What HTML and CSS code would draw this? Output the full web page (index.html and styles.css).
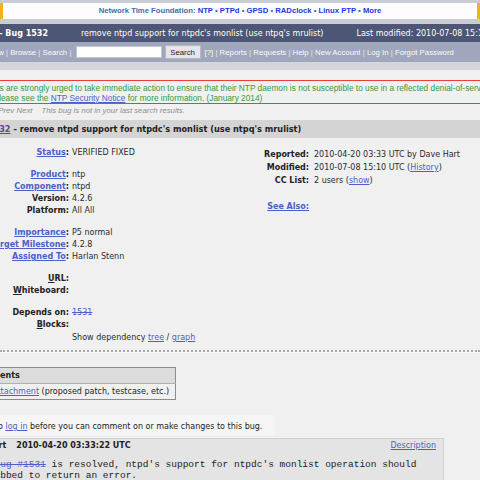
FILE: index.html
```html
<!DOCTYPE html>
<html>
<head>
<meta charset="utf-8">
<title>Bug 1532 – remove ntpd support for ntpdc's monlist (use ntpq's mrulist)</title>
<link rel="stylesheet" href="styles.css">
</head>
<body>
<div class="top">
  <div class="banner"><span class="ntf">Network Time Foundation:</span> <a href="#">NTP</a> • <a href="#">PTPd</a> • <a href="#">GPSD</a> • <a href="#">RADclock</a> • <a href="#">Linux PTP</a> • <a href="#">More</a></div>
</div>
<div class="header">
  <span class="h-title">Bugzilla – Bug 1532</span>
  <span class="h-sub">remove ntpd support for ntpdc's monlist (use ntpq's mrulist)</span>
  <span class="h-info">Last modified: 2010-07-08 15:10:43 UTC</span>
</div>
<div class="nav">
  <span class="nav-in"><a href="#">Home</a> | <a href="#">New</a> | <a href="#">Browse</a> | <a href="#">Search</a> | </span>
  <input class="q" type="text">
  <button class="btn">Search</button>
  <span class="nav-rest"><a href="#">[?]</a> | <a href="#">Reports</a> | <a href="#">Requests</a> | <a href="#">Help</a> | <a href="#">New Account</a> | <a href="#">Log In</a> | <a href="#">Forgot Password</a></span>
</div>
<div class="gap"></div>
<div class="main">
  <div class="notice"><span class="l1">NTP users are strongly urged to take immediate action to ensure that their NTP daemon is not susceptible to use in a reflected denial-of-service (DrDoS) attack.</span><br>Please see the <a href="#">NTP Security Notice</a> for more information. (January 2014)</div>
  <div class="navline"><span class="pn">First Last Prev Next</span><span class="nolist">This bug is not in your last search results.</span></div>
  <div class="titlebar"><a href="#" class="bugid">Bug 1532</a> - remove ntpd support for ntpdc's monlist (use ntpq's mrulist)</div>
  <div class="fields">
    <div class="fl">
      <div class="lab"><a href="#">Status</a>:</div><div class="val">VERIFIED FIXED</div>
      <div class="sp"></div>
      <div class="lab"><a href="#">Product</a>:</div><div class="val">ntp</div>
      <div class="lab"><a href="#">Component</a>:</div><div class="val">ntpd</div>
      <div class="lab">Version:</div><div class="val">4.2.6</div>
      <div class="lab">Platform:</div><div class="val">All All</div>
      <div class="sp"></div>
      <div class="lab"><a href="#">Importance</a>:</div><div class="val">P5 normal</div>
      <div class="lab"><a href="#">Target Milestone</a>:</div><div class="val">4.2.8</div>
      <div class="lab"><a href="#">Assigned To</a>:</div><div class="val">Harlan Stenn</div>
      <div class="sp"></div>
      <div class="lab"><u>U</u>RL:</div><div class="val"></div>
      <div class="lab"><u>W</u>hiteboard:</div><div class="val"></div>
      <div class="sp"></div>
      <div class="lab">Depends on:</div><div class="val"><a href="#" class="closed">1531</a></div>
      <div class="lab"><u>B</u>locks:</div><div class="val"></div>
      <div class="lab last"></div><div class="val last">Show dependency <a href="#">tree</a> / <a href="#">graph</a></div>
    </div>
    <div class="fr">
      <div class="lab">Reported:</div><div class="val">2010-04-20 03:33 UTC by Dave Hart</div>
      <div class="lab">Modified:</div><div class="val">2010-07-08 15:10 UTC (<a href="#">History</a>)</div>
      <div class="lab">CC List:</div><div class="val">2 users (<a href="#">show</a>)</div>
      <div class="sp"></div>
      <div class="lab"><a href="#" class="seealso">See Also:</a></div><div class="val"></div>
    </div>
  </div>
  <hr class="sep">
  <table class="att">
    <tr><th>Attachments</th></tr>
    <tr><td><a href="#">Add an attachment</a> (proposed patch, testcase, etc.)</td></tr>
  </table>
  <div class="login">You need to <a href="#">log in</a> before you can comment on or make changes to this bug.</div>
  <div class="comment">
    <div class="chead"><span class="who">Dave Hart</span><span class="when">2010-04-20 03:33:22 UTC</span><a href="#" class="desc">Description</a></div>
    <pre class="ctext">Once <a href="#" class="closed">Bug #1531</a> is resolved, ntpd's support for ntpdc's monlist operation should
be stubbed to return an error.</pre>
  </div>
</div>
</body>
</html>
```
FILE: styles.css
```css
html, body {
  margin: 0;
  padding: 0;
}
body {
  width: 480px;
  height: 480px;
  overflow: hidden;
  background: #f0f0f0;
  font-family: "DejaVu Sans", Verdana, sans-serif;
  font-size: 8px;
  color: #222;
}
a {
  color: #4d5fc8;
}

.top {
  background: #c9ccd3;
  padding: 3px 0 5px;
}
.banner {
  background: #fdfdfd;
  border-left: 3px solid #f3b21a;
  border-right: 3px solid #f3b21a;
  height: 16px;
  line-height: 16px;
  text-align: center;
  font-family: "Liberation Sans", Arial, sans-serif;
  font-weight: bold;
  font-size: 7.7px;
  color: #3d6ea8;
  white-space: nowrap;
}
.banner a {
  color: #1e36e0;
  text-decoration: none;
}

.header {
  background: #4d5674;
  height: 18px;
  display: flex;
  align-items: center;
  gap: 33px;
  color: #fff;
  white-space: nowrap;
}
.h-title {
  font-weight: bold;
  margin-left: -40px;
}

.nav {
  background: #a0a6bc;
  height: 20px;
  display: flex;
  align-items: center;
  white-space: nowrap;
  font-family: "Liberation Sans", Arial, sans-serif;
  font-size: 7.8px;
  color: #e8eaf2;
}
.nav a {
  color: #fafbff;
  text-decoration: none;
}
.nav-in {
  margin-left: -39px;
  white-space: pre;
}
.q {
  width: 86px;
  height: 12px;
  box-sizing: border-box;
  border: 1px solid #c4c7d2;
  background: #fff;
  margin: 0 3px 0 2px;
  padding: 0;
}
.btn {
  width: 36px;
  height: 14px;
  box-sizing: border-box;
  padding: 0;
  border: 1px solid #b4b8c4;
  background: #e6e6e8;
  font-family: "Liberation Sans", Arial, sans-serif;
  font-size: 7.8px;
  color: #222;
  margin-right: 4px;
}
.nav-rest {
  white-space: pre;
}

.gap {
  height: 8px;
  background: #d4d6da;
}

.main {
  padding-top: 10px;
}
.notice {
  border: 1px solid #f23a3a;
  margin-left: -20px;
  margin-right: -300px;
  padding: 2px 0 0 12.6px;
  line-height: 10px;
  height: 20px;
  font-family: "Liberation Sans", Arial, sans-serif;
  font-size: 8.3px;
  color: #37993a;
  white-space: nowrap;
}
.notice .l1 {
  margin-left: -29px;
}

.navline {
  height: 14px;
  line-height: 14px;
  display: flex;
  gap: 9px;
  white-space: nowrap;
  font-family: "Liberation Sans", Arial, sans-serif;
  font-style: italic;
  font-size: 7.8px;
  color: #8d8d8d;
}
.pn {
  margin-left: -36px;
}

.titlebar {
  margin-top: 2px;
  height: 18px;
  line-height: 18px;
  background: #d4d4d4;
  font-weight: bold;
  font-size: 8.2px;
  white-space: nowrap;
  margin-left: -33px;
}
.titlebar .bugid {
  color: #6a3f9c;
}

.fields {
  display: flex;
  padding-top: 9px;
  white-space: nowrap;
}
.fl {
  margin-left: -50px;
  width: 313px;
  display: grid;
  grid-template-columns: 119px 1fr;
  column-gap: 3px;
  align-content: start;
  line-height: 12px;
}
.fl .lab,
.fl .val {
  height: 12px;
}
.fr {
  margin-top: 1px;
  display: grid;
  grid-template-columns: 46px 1fr;
  column-gap: 5px;
  align-content: start;
  line-height: 13px;
}
.fr .lab,
.fr .val {
  height: 13px;
}
.lab {
  text-align: right;
  font-weight: bold;
}
.val {
  color: #2a2a2a;
}
.sp {
  grid-column: 1 / 3;
}
.fl .sp {
  height: 10px;
}
.fr .sp {
  height: 13px;
}
.fl .last {
  height: 14px;
  line-height: 14px;
}
.closed {
  text-decoration: line-through;
}
.seealso {
  font-weight: bold;
}

.sep {
  margin: 5px 0 0;
  border: 0;
  border-top: 2px dotted #a8a8a8;
  border-bottom: 1px solid #fafafa;
  height: 0;
}

.att {
  margin-top: 14px;
  margin-left: -42px;
  border-collapse: collapse;
  border: 1px solid #8c8c8c;
  white-space: nowrap;
}
.att th {
  background: #dcdcdc;
  text-align: left;
  height: 15px;
  line-height: 15px;
  padding: 0 6px 0 3px;
  font-weight: bold;
  border-bottom: 1px solid #b0b0b0;
}
.att td {
  height: 15px;
  line-height: 15px;
  padding: 0 6px 0 3px;
}

.login {
  margin-top: 15px;
  margin-left: -44px;
  width: 319px;
  height: 20px;
  box-sizing: border-box;
  padding-top: 7px;
  line-height: 10px;
  background: #f5f5f5;
  white-space: nowrap;
}

.comment {
  margin-top: 3px;
  margin-left: -60px;
  width: 504px;
  background: #e4e4e4;
  border: 1px solid #d0d0d0;
  box-sizing: border-box;
  padding: 2px 7px 6px 20px;
}
.chead {
  display: flex;
  height: 10px;
  line-height: 10px;
  font-weight: bold;
  white-space: nowrap;
}
.when {
  margin-left: 10px;
}
.desc {
  margin-left: auto;
  font-weight: normal;
}
.ctext {
  margin: 8px 0 0 5px;
  font-family: "Liberation Mono", "Courier New", monospace;
  font-size: 9.5px;
  line-height: 11px;
  color: #222;
}
```
